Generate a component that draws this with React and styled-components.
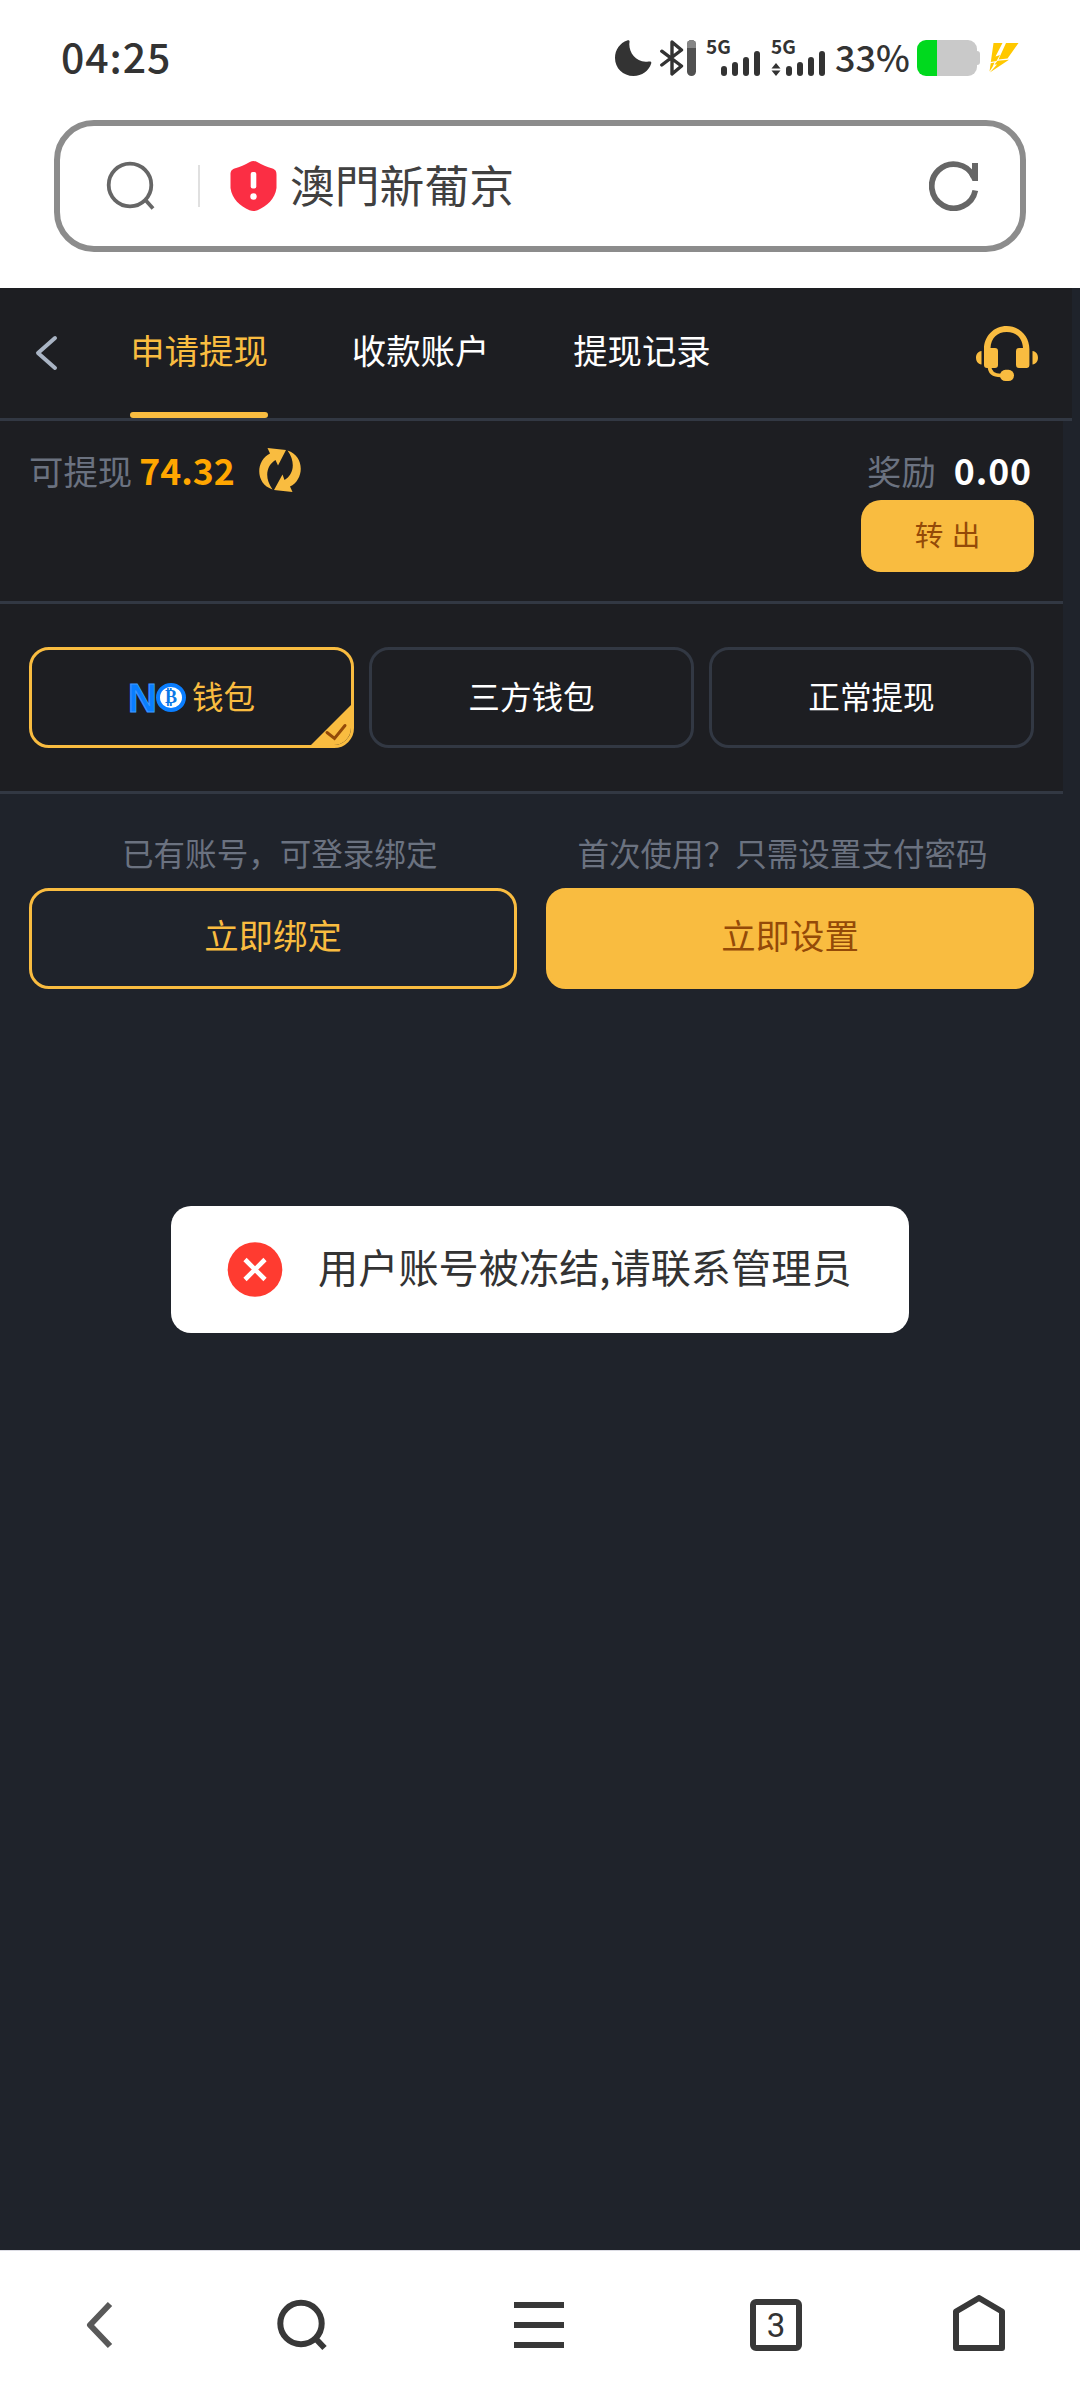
import React from "react";
import styled, { createGlobalStyle } from "styled-components";

const Global = createGlobalStyle`
  * { box-sizing: border-box; }
  body { margin: 0; background: #fff; }
  button { margin: 0; padding: 0; border: 0; background: none; font: inherit; color: inherit; }
  svg { display: block; flex: none; }
`;

const Screen = styled.div`
  width: 1080px;
  height: 2400px;
  display: flex;
  flex-direction: column;
  overflow: hidden;
  background: #fff;
  font-family: "Noto Sans CJK SC", "Noto Sans", sans-serif;
`;

/* ---- status bar ---- */
const StatusBar = styled.div`
  height: 120px;
  padding: 40px 61px 44px 61px;
  display: flex;
  align-items: center;
  color: #333;
`;
const Clock = styled.div`
  font-size: 41px;
  line-height: 36px;
  height: 42px;
  font-weight: 500;
  letter-spacing: 0.9px;
  margin-right: auto;
`;
const StatusIcons = styled.div`
  display: flex;
  align-items: center;
  height: 36px;
`;
const Slot = styled.div`
  margin-left: ${(p) => p.$gap}px;
  display: flex;
`;
const Signal = styled.div`
  width: 54px;
  height: 36px;
  margin-left: ${(p) => p.$gap}px;
  display: flex;
  flex-direction: column;
`;
const SignalLabel = styled.span`
  height: 11px;
  font-size: 19px;
  line-height: 11px;
  font-weight: 700;
`;
const SignalBars = styled.div`
  height: 25px;
  display: flex;
  align-items: flex-end;
  justify-content: flex-end;
  gap: 4.6px;
`;
const Bar = styled.i`
  width: 6.4px;
  height: ${(p) => p.$h}px;
  border-radius: 3px;
  background: #333;
`;
const Percent = styled.div`
  margin-left: 10px;
  width: 74px;
  height: 40px;
  font-size: 36px;
  font-weight: 500;
  line-height: 36px;
  white-space: nowrap;
`;
const Battery = styled.div`
  width: 60px;
  height: 36px;
  margin-left: 8px;
  border-radius: 9px;
  background: linear-gradient(to right, #00d91e 20px, #c9c9c9 20px);
`;
const BatteryTip = styled.i`
  width: 3px;
  height: 14px;
  border-radius: 0 3px 3px 0;
  background: #c9c9c9;
`;

/* ---- address bar ---- */
const AddressBar = styled.div`
  width: 972px;
  height: 132px;
  margin: 0 54px 36px;
  padding: 0 41px 0 46px;
  border: 6px solid #8c8c8c;
  border-radius: 40px;
  display: flex;
  align-items: center;
`;
const Divider = styled.i`
  width: 2px;
  height: 42px;
  margin: 0 30px 0 42px;
  background: #e0e0e0;
`;
const SiteTitle = styled.div`
  margin: 0 auto 0 13px;
  padding-bottom: 5px;
  font-family: "Noto Sans CJK TC", sans-serif;
  font-size: 44.8px;
  line-height: 60px;
  color: #404040;
`;

/* ---- web page ---- */
const Page = styled.main`
  height: 1962px;
  background: #1f232b;
  display: flex;
  flex-direction: column;
  font-size: 34.4px;
`;
const Header = styled.header`
  width: 1072px;
  height: 133px;
  padding: 0 34px 0 35px;
  background: #1d1e22;
  border-bottom: 3px solid #323843;
  display: flex;
  align-items: center;
`;
const Tabs = styled.nav`
  height: 130px;
  margin: 0 auto 0 72px;
  display: flex;
  gap: 83.8px;
`;
const Tab = styled.button`
  height: 130px;
  line-height: 122px;
  color: ${(p) => (p.$active ? "#f9bc40" : "#fff")};
  display: flex;
  flex-direction: column;
  justify-content: space-between;
`;
const Underline = styled.i`
  width: 138px;
  height: 6px;
  border-radius: 3px;
  background: #f9bc40;
`;
const Balance = styled.section`
  width: 1063px;
  height: 183px;
  padding: 24px 29px 0;
  background: #1d1e22;
  border-bottom: 3px solid #323843;
  display: flex;
  justify-content: space-between;
`;
const Amounts = styled.div`
  height: 50px;
  display: flex;
  align-items: center;
  color: #6b7280;
  line-height: 50px;
`;
const Amount = styled.b`
  font-weight: 700;
  font-size: 35.6px;
  color: ${(p) => p.$color};
  letter-spacing: ${(p) => p.$track || 0}px;
  margin: 0 ${(p) => p.$right}px 0 ${(p) => p.$left}px;
`;
const Reward = styled.div`
  display: flex;
  flex-direction: column;
  align-items: flex-end;
`;
const TransferButton = styled.button`
  width: 173px;
  height: 72px;
  margin-top: 5px;
  padding-bottom: 4px;
  border-radius: 20px;
  background: #f9bc40;
  color: #944a08;
  font-size: 28.6px;
  line-height: 64px;
  word-spacing: 2px;
  text-align: center;
`;
const Methods = styled.section`
  width: 1063px;
  height: 190px;
  padding: 43px 29px 0;
  background: #1d1e22;
  border-bottom: 3px solid #323843;
  display: grid;
  grid-template-columns: repeat(3, 325px);
  gap: 15px;
`;
const Method = styled.button`
  position: relative;
  height: 101px;
  border: 3px solid ${(p) => (p.$active ? "#f9bc40" : "#323843")};
  border-radius: 20px;
  color: ${(p) => (p.$active ? "#f9bc40" : "#fff")};
  font-size: 31.6px;
  line-height: 92px;
  display: flex;
  justify-content: center;
  align-items: center;
  overflow: hidden;
`;
const MethodLabel = styled.span`
  margin-top: -5px;
`;
const Corner = styled.svg`
  position: absolute;
  right: -1px;
  bottom: -1px;
`;
const Logo = styled.span`
  display: flex;
  align-items: center;
  margin-right: 6px;
`;
const LogoLetter = styled.span`
  width: 28px;
  font-family: "Liberation Sans", Arial, sans-serif;
  font-weight: 700;
  font-size: 40px;
  line-height: 30px;
  color: #0a7eff;
  -webkit-text-stroke: 1px #3d9aff;
`;
const Coin = styled.span`
  width: 30px;
  height: 29px;
  border-radius: 50%;
  border: 4px solid #0a7eff;
  background: #fff;
  color: #0a78e6;
  font-family: "Liberation Serif", serif;
  font-weight: 700;
  font-size: 18px;
  line-height: 21px;
  text-align: center;
`;
const Hints = styled.div`
  height: 94px;
  padding: 38px 0 0 122px;
  display: flex;
  gap: 140px;
  color: #6b7280;
  font-size: 31.55px;
  line-height: 40px;
  white-space: nowrap;
`;
const Actions = styled.div`
  padding-left: 29px;
  display: flex;
  gap: 29px;
`;
const Action = styled.button`
  width: 488px;
  height: 101px;
  border: 3px solid #f9bc40;
  border-radius: 20px;
  background: ${(p) => (p.$filled ? "#f9bc40" : "transparent")};
  color: ${(p) => (p.$filled ? "#944a08" : "#f9bc40")};
  line-height: 87px;
  padding-bottom: 8px;
`;
const Toast = styled.div`
  width: 738px;
  height: 127px;
  margin: 217px 0 0 171px;
  padding-left: 56px;
  border-radius: 20px;
  background: #fff;
  color: #333;
  display: flex;
  align-items: center;
  gap: 35px;
  font-size: 40.2px;
  line-height: 60px;
  white-space: nowrap;
`;
const ToastText = styled.span`
  margin-top: -7px;
`;

/* ---- browser toolbar ---- */
const Toolbar = styled.footer`
  height: 150px;
  border-top: 1px solid #dcdce4;
  padding: 0 0 1px 86px;
  display: flex;
  align-items: center;
`;
const ToolItem = styled.div`
  display: flex;
  margin-left: ${(p) => p.$gap}px;
  padding-bottom: ${(p) => p.$lift || 0}px;
`;
const Windows = styled.button`
  width: 52px;
  height: 52px;
  border: 6px solid #383838;
  border-radius: 6px;
  color: #333;
  font-family: Roboto, sans-serif;
  font-size: 33px;
  line-height: 41px;
  text-align: center;
`;

const Moon = () => (
  <svg width="37" height="36" viewBox="0 0 37 36">
    <path fill="#333" d="M12.2.4c1.500-.6 2.700.1 2.300 1.800C13 11.500 20.500 23.500 33.500 21.500c2.300-.4 3.200.5 2.700 2C33.800 31 27 36 18.500 36 8 36 0 28.200 0 18 0 9.500 5 2.800 12.200.4Z" />
  </svg>
);
const Bluetooth = () => (
  <svg width="24" height="36" viewBox="0 0 24 36" fill="none" stroke="#333" strokeWidth="3.400" strokeLinecap="round" strokeLinejoin="round">
    <path d="M1.800 11.200 21.500 26 12 34V2l9.500 8L1.800 25" />
  </svg>
);
const Signals = ({ gap, data }) => (
  <Signal $gap={gap}>
    <SignalLabel>5G</SignalLabel>
    <SignalBars>
      {data && (
        <svg width="10" height="13" viewBox="0 0 10 13" fill="#333">
          <path d="M5 0l4.500 5.400h-9zM.5 7.600h9L5 13z" />
        </svg>
      )}
      {[10, 14, 19, 25].map((h) => <Bar key={h} $h={h} />)}
    </SignalBars>
  </Signal>
);

export default function App() {
  return (
    <>
      <Global />
      <Screen>
        <StatusBar>
          <Clock>04:25</Clock>
          <StatusIcons>
            <Moon />
            <Slot $gap={8}><Bluetooth /></Slot>
            <Slot $gap={3}>
              <svg width="9" height="36">
                <defs><clipPath id="pill"><rect width="9" height="36" rx="4.500" /></clipPath></defs>
                <g clipPath="url(#pill)">
                  <rect width="9" height="36" fill="#505050" />
                  <rect width="9" height="8" fill="#858585" />
                </g>
              </svg>
            </Slot>
            <Signals gap={10} />
            <Signals gap={11} data />
            <Percent>33%</Percent>
            <Battery />
            <BatteryTip />
            <Slot $gap={9}>
              <svg width="30" height="30" viewBox="0 0 30 30" fill="#ffc800">
                <path d="M4.500 0H13.500L6.500 13.500 11 12 7.500 18 1.800 19zM17 0H29.500L18.500 15.500 9.500 16.500zM8.500 17.700 20 16.800 .8 29.500 8 21.500 5.500 21.500zM1.700 20.300 5.500 19.500 3.500 24 .5 28.500z" />
              </svg>
            </Slot>
          </StatusIcons>
        </StatusBar>

        <AddressBar>
          <svg width="50" height="50" viewBox="0 0 50 50" fill="none" stroke="#666" strokeWidth="3.800">
            <circle cx="24" cy="24" r="21.300" />
            <path d="M39 38.500 47 47.500" />
          </svg>
          <Divider />
          <svg width="47" height="50" viewBox="0 0 47 50">
            <path fill="#fb2e44" d="M19.800 1q3.700-1.800 7.400 0C32 4 37 6 42.500 7.600 46 9 46.500 11 46.500 14v13C45 38 37 45 27.500 49.200q-4 1.500-8 0C10 45 2 38 .5 27V14C.5 11 1 9 4.500 7.600 10 6 15 4 19.800 1Z" />
            <rect x="20.700" y="11" width="5.600" height="16.500" rx="2" fill="#fff" />
            <circle cx="23.500" cy="35.500" r="3.200" fill="#fff" />
          </svg>
          <SiteTitle>澳門新葡京</SiteTitle>
          <svg width="50" height="50" viewBox="0 0 50 50" fill="none" stroke="#666" strokeWidth="5.800">
            <path d="M46.300 29.500A22 22 0 1 1 44.500 15.500" />
            <path d="M43 2h6v18h-5.500L38 8.500l5 2z" fill="#666" stroke="none" />
          </svg>
        </AddressBar>

        <Page>
          <Header>
            <svg width="23" height="36" viewBox="0 0 23 36" fill="none" stroke="#a9b4c4" strokeWidth="4" strokeLinecap="round" strokeLinejoin="round">
              <path d="M20 3 3 18 20 33" />
            </svg>
            <Tabs>
              <Tab $active>申请提现<Underline /></Tab>
              <Tab>收款账户</Tab>
              <Tab>提现记录</Tab>
            </Tabs>
            <svg width="62" height="55" viewBox="0 0 62 55" fill="#f9bc40">
              <path d="M5.500 25v13.500C-1.800 38-1.800 25.500 5.500 25ZM56.500 25v13.500c7.300-.5 7.300-13 0-13.500Z" />
              <path d="M8 23C8 10 18 0 30.700 0S53.400 10 53.400 23v16q0 3-3 3H43q-3 0-3-3V25q0-3 3-3h4C46.500 12 40 6 30.700 6S15 12 14.500 22H19q3 0 3 3v14q0 3-3 3h-8q-3 0-3-3Z" />
              <path d="M13.500 40C13.500 46.500 17 49.500 25 49.500" fill="none" stroke="#f9bc40" strokeWidth="3.600" />
              <rect x="24" y="43.800" width="14" height="11.200" rx="5.500" />
            </svg>
          </Header>

          <Balance>
            <Amounts>
              可提现
              <Amount $color="#ffa600" $left={7} $right={24}>74.32</Amount>
              <svg width="42" height="44" viewBox="0 0 42 44" fill="#f9bc40">
                <path d="M8.500 0 27 2 19 17.500 16.500 12C8 17 4.500 29 13.500 41.500-4 36-3.500 12.500 11 5.500Z" />
                <path d="M33.500 44 15 42 23.500 26.500 25.500 32C34 27 37.500 15 28.500 2.500 46 8 45.500 31.500 31 38.500Z" />
              </svg>
            </Amounts>
            <Reward>
              <Amounts>
                奖励
                <Amount $color="#fff" $track={0.9} $left={18} $right={2}>0.00</Amount>
              </Amounts>
              <TransferButton>转 出</TransferButton>
            </Reward>
          </Balance>

          <Methods>
            <Method $active>
              <Logo><LogoLetter>N</LogoLetter><Coin>₿</Coin></Logo>
              <MethodLabel>钱包</MethodLabel>
              <Corner width="42" height="42" viewBox="0 0 42 42">
                <path d="M42 0V42H0Z" fill="#f9bc40" />
                <path d="M17 28.500 24.500 34.500 35 21.500" fill="none" stroke="#944a08" strokeWidth="3" strokeLinecap="round" />
              </Corner>
            </Method>
            <Method><MethodLabel>三方钱包</MethodLabel></Method>
            <Method><MethodLabel>正常提现</MethodLabel></Method>
          </Methods>

          <Hints>
            <span>已有账号，可登录绑定</span>
            <span>首次使用？只需设置支付密码</span>
          </Hints>
          <Actions>
            <Action>立即绑定</Action>
            <Action $filled>立即设置</Action>
          </Actions>

          <Toast>
            <svg width="56" height="56" viewBox="0 0 56 56">
              <circle cx="28" cy="27.500" r="27.300" fill="#ff3b30" />
              <path d="M18 17.500 38 37.500M38 17.500 18 37.500" stroke="#fff" strokeWidth="4.600" />
            </svg>
            <ToastText>用户账号被冻结,请联系管理员</ToastText>
          </Toast>
        </Page>

        <Toolbar>
          <svg width="28" height="48" viewBox="0 0 28 48" fill="none" stroke="#595959" strokeWidth="6" strokeLinejoin="round">
            <path d="M24 3 4 24 24 45" />
          </svg>
          <ToolItem $gap={163}>
            <svg width="51" height="52" viewBox="0 0 51 52" fill="none" stroke="#383838" strokeWidth="6">
              <circle cx="24" cy="24.500" r="20.700" />
              <path d="M38 39 47.500 49" />
            </svg>
          </ToolItem>
          <ToolItem $gap={186}>
            <svg width="50" height="46" viewBox="0 0 50 46" fill="#383838">
              <path d="M0 0h50v6H0zM0 20h50v6H0zM0 40h50v6H0z" />
            </svg>
          </ToolItem>
          <ToolItem $gap={186}>
            <Windows>3</Windows>
          </ToolItem>
          <ToolItem $gap={151} $lift={4}>
            <svg width="52" height="56" viewBox="0 0 52 56" fill="none" stroke="#383838" strokeWidth="6" strokeLinejoin="round">
              <path d="M3 16.500 26 3 49 16.500V53H3Z" />
            </svg>
          </ToolItem>
        </Toolbar>
      </Screen>
    </>
  );
}
